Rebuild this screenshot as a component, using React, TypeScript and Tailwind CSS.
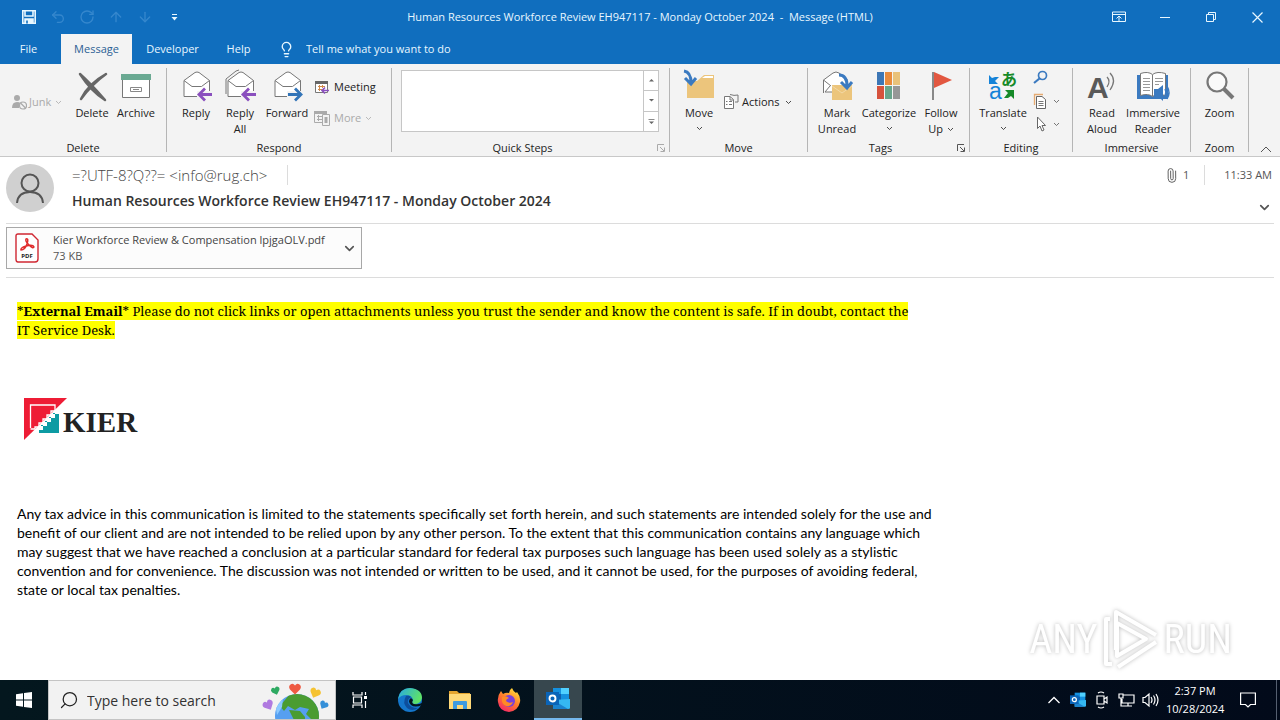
import type { ReactNode } from 'react';
import { clsx } from 'clsx';
import { ArrowDown, ArrowUp, ChevronDown, ChevronUp, Lightbulb, Paperclip, RotateCw, Search, Undo2 } from 'lucide-react';

const Caret = ({ className }: { className?: string }) => (
  <svg viewBox="0 0 7 5" className={clsx('w-[7px] h-[5px] shrink-0', className)} fill="none" stroke="currentColor" strokeOpacity="0.8">
    <path d="M1 1 L3.5 3.5 L6 1" />
  </svg>
);

const Icon = ({ children }: { children: ReactNode }) => (
  <svg viewBox="0 0 32 32" className="w-8 h-8 shrink-0 overflow-visible" fill="none">
    {children}
  </svg>
);

const SmallIcon = ({ children }: { children: ReactNode }) => (
  <svg viewBox="0 0 16 16" className="w-4 h-4 shrink-0" fill="none">
    {children}
  </svg>
);

const Envelope = ({ back = false }: { back?: boolean }) => (
  <>
    {back && <path d="M2 24 V9 L12 1 L15 0" stroke="#777" />}
    <path d="M4 10.500 L15 2.500 Q17 1.500 19 2.500 L29.500 10.500 V26.500 H4 Z" fill="#fff" stroke="#777" />
    <path d="M4 10.500 L12 16.500 H21.500 L29.500 10.500" stroke="#777" />
  </>
);

const LeftArrow = () => (
  <>
    <path d="M17 24 H33" stroke="#f3f3f3" strokeWidth="6" />
    <path d="M32 24.500 H19 M25 18.500 L19 24.500 L25 30.500" stroke="#8a4fbe" strokeWidth="2.800" />
  </>
);

type RibbonButtonProps = {
  icon: ReactNode;
  lines: string[];
  caret?: 'below' | 'inline';
  className?: string;
};

const RibbonButton = ({ icon, lines, caret, className }: RibbonButtonProps) => (
  <button type="button" className={clsx('flex flex-col items-center shrink-0 pt-[2px] leading-4', className)}>
    {icon}
    <span className="flex flex-col items-center pt-[3px] whitespace-nowrap">
      {lines.map((line, i) => (
        <span key={line} className="flex items-center gap-1">
          {line}
          {caret === 'inline' && i === lines.length - 1 && <Caret />}
        </span>
      ))}
    </span>
    {caret === 'below' && <Caret className="mt-[5px]" />}
  </button>
);

type GroupProps = { label: string; className: string; launcher?: 'dim' | 'dark'; children: ReactNode };

const Group = ({ label, className, launcher, children }: GroupProps) => (
  <section aria-label={label} className={clsx('relative flex flex-col shrink-0 h-[84px] border-r border-[#b5b5b5] mt-1', className)}>
    <div className="flex h-[74px] shrink-0">{children}</div>
    <div className="text-center leading-3">{label}</div>
    {launcher && (
      <button
        type="button"
        aria-label={`${label} settings`}
        className={clsx('absolute right-1 bottom-0', launcher === 'dim' ? 'text-[#aaa]' : 'text-[#555]')}
      >
        <svg viewBox="0 0 8 8" className="w-2 h-2" fill="none" stroke="currentColor">
          <path d="M0.500 7 V0.500 H7 M3 3 L7 7 M7.500 3.500 V7.500 H3.500" />
        </svg>
      </button>
    )}
  </section>
);

const TitleBar = () => (
  <div className="flex items-center h-[34px] text-[#e8f7ff]">
    <div className="flex-1">
      <div className="flex items-center gap-[13px] pl-[21px]">
        <button type="button" aria-label="Save">
          <svg viewBox="0 0 16 16" className="w-4 h-4" fill="none" stroke="currentColor" strokeWidth="1.600">
            <path d="M1.800 1.800 H14.200 V14.200 H1.800 Z M4 2 V7 H12 V2" />
            <path d="M4 10 H12 V14 H4 Z" fill="currentColor" />
            <path d="M6 11.500 V14.500" stroke="#106ebe" />
          </svg>
        </button>
        <button type="button" aria-label="Undo" className="text-[#3587cd]"><Undo2 size={16} /></button>
        <button type="button" aria-label="Redo" className="text-[#3587cd]"><RotateCw size={16} /></button>
        <button type="button" aria-label="Previous item" className="text-[#3587cd]"><ArrowUp size={16} /></button>
        <button type="button" aria-label="Next item" className="text-[#3587cd]"><ArrowDown size={16} /></button>
        <button type="button" aria-label="Customize toolbar" className="w-4 flex justify-center">
          <svg viewBox="0 0 7 7" className="w-[7px] h-[7px]" fill="currentColor">
            <path d="M1 0 H6 V1 H1 Z M0.500 3 H6.500 L3.500 6.500 Z" />
          </svg>
        </button>
      </div>
    </div>
    <h1 className="whitespace-pre">Human Resources Workforce Review EH947117 - Monday October 2024  -  Message (HTML)</h1>
    <div className="flex flex-1 justify-end h-[30px]">
      <button type="button" aria-label="Ribbon display options" className="w-[46px] flex items-center justify-center">
        <svg viewBox="0 0 14 12" className="w-[14px] h-3" fill="none" stroke="currentColor">
          <path d="M0.500 1 H13.500 V10.500 H0.500 Z M0.500 3.500 H13.500 M7 10 V5 M4.500 7.500 L7 5 L9.500 7.500" />
        </svg>
      </button>
      <button type="button" aria-label="Minimize" className="w-[46px] flex items-center justify-center">
        <span className="w-[10px] h-px bg-[#e8f7ff]" />
      </button>
      <button type="button" aria-label="Restore" className="w-[46px] flex items-center justify-center">
        <svg viewBox="0 0 10 10" className="w-[10px] h-[10px]" fill="none" stroke="currentColor">
          <path d="M0.500 2.500 H7.500 V9.500 H0.500 Z M2.500 2.500 V0.500 H9.500 V7.500 H7.500" />
        </svg>
      </button>
      <button type="button" aria-label="Close" className="w-[46px] flex items-center justify-center">
        <svg viewBox="0 0 11 11" className="w-[11px] h-[11px]" fill="none" stroke="currentColor" strokeWidth="1.200">
          <path d="M0.500 0.500 L10.500 10.500 M10.500 0.500 L0.500 10.500" />
        </svg>
      </button>
    </div>
  </div>
);

const Tabs = () => (
  <nav className="flex h-[30px] text-[#e8f7ff]">
    <button type="button" className="w-[61px] pr-1">File</button>
    <button type="button" className="w-[71px] bg-[#f3f3f3] text-[#2b5f94]">Message</button>
    <button type="button" className="w-[81px]">Developer</button>
    <button type="button" className="w-[51px]">Help</button>
    <label htmlFor="tell-me" className="flex items-center pl-[14px] pr-[11px]">
      <Lightbulb size={17} strokeWidth={1.9} />
    </label>
    <input
      id="tell-me"
      aria-label="Tell me what you want to do"
      placeholder="Tell me what you want to do"
      className="w-[200px] bg-transparent outline-none placeholder:text-[#e8f7ff]"
    />
  </nav>
);

const Ribbon = () => (
  <div className="flex h-[93px] bg-[#f3f3f3] border-b border-[#c8c8c8] text-[#222]">
    <Group label="Delete" className="w-[167px]">
      <button type="button" disabled className="flex items-center gap-[2px] w-[70px] pl-[11px] pb-[6px] text-[#aaa]">
        <SmallIcon>
          <circle cx="6" cy="4" r="3" fill="#aaa" />
          <path d="M1 14 Q1 8 6 8 Q9 8 9 9 L8 14 Z" fill="#aaa" />
          <circle cx="12" cy="11.500" r="3.500" fill="#f3f3f3" stroke="#aaa" strokeWidth="1.200" />
          <path d="M9.500 9 L14.500 14" stroke="#aaa" strokeWidth="1.200" />
        </SmallIcon>
        Junk
        <Caret className="ml-[2px]" />
      </button>
      <RibbonButton
        className="w-11"
        lines={['Delete']}
        icon={
          <Icon>
            <path d="M4 4 Q14 13 29 30 Q15 21 4 4 Z M30 4 Q16 14 5 29 Q12 14 30 4 Z" fill="#666" stroke="#666" strokeWidth="2.500" strokeLinejoin="round" />
          </Icon>
        }
      />
      <RibbonButton
        className="w-11"
        lines={['Archive']}
        icon={
          <Icon>
            <path d="M2.500 9 H29.500 V27.500 H2.500 Z" fill="#fff" stroke="#777" />
            <path d="M1 4 H31 V10 H1 Z" fill="#6aa992" />
            <path d="M10.500 17.500 H21.500 V21.500 H10.500 Z M13 19.500 H19" stroke="#888" />
          </Icon>
        }
      />
    </Group>

    <Group label="Respond" className="w-[225px]">
      <RibbonButton className="w-11 ml-[7px]" lines={['Reply']} icon={<Icon><Envelope /><LeftArrow /></Icon>} />
      <RibbonButton className="w-11" lines={['Reply', 'All']} icon={<Icon><Envelope back /><LeftArrow /></Icon>} />
      <RibbonButton
        className="w-[50px]"
        lines={['Forward']}
        icon={
          <Icon>
            <Envelope />
            <path d="M16 24 H32" stroke="#f3f3f3" strokeWidth="6" />
            <path d="M17 24.500 H30 M24 18.500 L30 24.500 L24 30.500" stroke="#3274b8" strokeWidth="2.800" />
          </Icon>
        }
      />
      <div className="flex flex-col gap-[15px] pt-[11px] pl-[2px] leading-4">
        <button type="button" className="flex items-center gap-1">
          <SmallIcon>
            <path d="M1.500 2.500 H13.500 V13.500 H1.500 Z" fill="#fff" stroke="#777" />
            <path d="M1 2 H14 V5 H1 Z" fill="#666" />
            <path d="M4 7.500 H11 M4 10.500 H8 M5.500 6 V12 M8.500 6 V9" stroke="#d08a4a" />
            <path d="M8 11.500 H15 M11 8.500 L8 11.500 L11 14.500" stroke="#8a4fbe" strokeWidth="1.600" />
          </SmallIcon>
          Meeting
        </button>
        <button type="button" disabled className="flex items-center gap-1 text-[#aaa]">
          <SmallIcon>
            <path d="M0.500 1.500 H12.500 V12.500 H0.500 Z M3 6.500 H8 M3 9.500 H8 M4.500 5 V11" stroke="#aaa" />
            <path d="M0 1 H13 V4 H0 Z" fill="#aaa" />
            <path d="M8.500 4.500 H15.500 V15.500 H8.500 Z" fill="#f3f3f3" stroke="#aaa" />
            <path d="M10.500 7 H13.500 V13 H10.500 Z" fill="#aaa" />
          </SmallIcon>
          More
          <Caret />
        </button>
      </div>
    </Group>

    <Group label="Quick Steps" className="w-[278px] pr-4" launcher="dim">
      <div className="flex shrink-0 ml-[9px] mt-[2px] w-[258px] h-[62px] bg-white border border-[#c6c6c6]">
        <div className="flex-1" />
        <div className="flex flex-col w-[15px] border-l border-[#c6c6c6] text-[#666]">
          {['M1 3.500 L3.500 1 L6 3.500 Z', 'M1 1 L3.500 3.500 L6 1 Z', 'M0.500 0 H6.500 V0.800 H0.500 Z M1 2.500 L3.500 5 L6 2.500 Z'].map((d, i) => (
            <button
              key={d}
              type="button"
              aria-label={['Scroll up', 'Scroll down', 'More steps'][i]}
              className={clsx('flex-1 flex items-center justify-center', i > 0 && 'border-t border-[#c6c6c6]')}
            >
              <svg viewBox="0 0 7 5" className="w-[7px] h-[5px]" fill="currentColor"><path d={d} /></svg>
            </button>
          ))}
        </div>
      </div>
    </Group>

    <Group label="Move" className="w-[138px]">
      <RibbonButton
        className="w-10 ml-[9px]"
        lines={['Move']}
        caret="below"
        icon={
          <Icon>
            <path d="M4 11 H14 L21 5 H31 V28 H4 Z" fill="#ecc57c" />
            <path d="M19 8 L22 6 H30 V8 Z" fill="#fff" />
            <path d="M1 1 Q8 2 8 13 M2 8 L8 14 L13 8" stroke="#3b7ac0" strokeWidth="3" />
          </Icon>
        }
      />
      <button type="button" className="flex items-center gap-[3px] pl-1 pb-[6px]">
        <SmallIcon>
          <path d="M1.500 2.500 H7 L10.500 5.500 V14.500 H1.500 Z" fill="#fff" stroke="#777" />
          <path d="M3 7.500 H4.500 M3 10.500 H4.500 M6 7.500 H9 M6 10.500 H9 M7 0.500 Q11 2 15 1 V8 H12 M7 3 V6 H10" stroke="#777" />
        </SmallIcon>
        Actions
        <Caret className="ml-[2px]" />
      </button>
    </Group>

    <Group label="Tags" className="w-[162px] pr-4" launcher="dark">
      <RibbonButton
        className="w-[52px] ml-[3px]"
        lines={['Mark', 'Unread']}
        icon={
          <Icon>
            <path d="M2.500 23 V10 L12 3 Q15 1 18 3 L26 9 V22 H4 L9 16 M2.500 10 L10 16" fill="#fff" stroke="#777" />
            <path d="M11 15 H31 V30 H11 Z" fill="#ecc57c" />
            <path d="M11 16 L21 23 L31 16" stroke="#f3d9a6" />
            <path d="M18 5 Q26 5 26 16 M20 12 L26 18 L31 12" stroke="#3b7ac0" strokeWidth="3" />
          </Icon>
        }
      />
      <RibbonButton
        className="w-[52px]"
        lines={['Categorize']}
        caret="below"
        icon={
          <Icon>
            <path d="M4 2 H11 V15 H4 Z" fill="#3c76b5" />
            <path d="M12 2 H19 V15 H12 Z" fill="#e98b3c" />
            <path d="M20 2 H27 V15 H20 Z" fill="#e9c27a" />
            <path d="M4 16 H11 V29 H4 Z" fill="#d6523c" />
            <path d="M12 16 H19 V29 H12 Z" fill="#68a58b" />
            <path d="M20 16 H27 V29 H20 Z" fill="#979797" />
          </Icon>
        }
      />
      <RibbonButton
        className="w-[52px]"
        lines={['Follow', 'Up']}
        caret="inline"
        icon={
          <Icon>
            <path d="M8 2 V30" stroke="#888" strokeWidth="2" />
            <path d="M9 2 L27 10 L9 18 Z" fill="#e25740" />
          </Icon>
        }
      />
    </Group>

    <Group label="Editing" className="w-[103px]">
      <RibbonButton
        className="w-[52px] ml-[7px]"
        lines={['Translate']}
        caret="below"
        icon={
          <Icon>
            <text x="14" y="15" fontSize="16" fontWeight="700" fill="#168a28" fontFamily="'Noto Sans CJK JP', sans-serif">あ</text>
            <text x="2" y="29" fontSize="23" fill="#1583d8" fontFamily="'Liberation Sans', sans-serif">a</text>
            <path d="M2 5 V14 H11 L8 11 L12 7 L8 7 L5 8 Z" fill="#1583d8" />
            <path d="M27 20 H18 L21 23 L17 28 H21 L24 26 L27 29 Z" fill="#168a28" />
          </Icon>
        }
      />
      <div className="flex flex-col gap-[7px] pl-1 pt-[2px] text-[#555]">
        <button type="button" aria-label="Find">
          <SmallIcon>
            <circle cx="9.500" cy="5.500" r="4" stroke="#3b7ac0" strokeWidth="1.700" />
            <path d="M6.500 8.500 L1 13" stroke="#3b7ac0" strokeWidth="2.200" />
          </SmallIcon>
        </button>
        <button type="button" aria-label="Related" className="flex items-center gap-1">
          <SmallIcon>
            <path d="M10 1.500 H1.500 V12" stroke="#e6ab72" strokeWidth="1.300" />
            <path d="M3.500 3.500 H9 L12.500 6.500 V15.500 H3.500 Z" fill="#fff" stroke="#666" />
            <path d="M5.500 8.500 H10.500 M5.500 10.500 H10.500 M5.500 12.500 H10.500" stroke="#777" />
          </SmallIcon>
          <Caret />
        </button>
        <button type="button" aria-label="Select" className="flex items-center gap-1">
          <SmallIcon>
            <path d="M4.500 1 V12.500 L7 10 L9 15 L11 14 L9 9.500 H12.500 Z" fill="#fff" stroke="#666" />
          </SmallIcon>
          <Caret />
        </button>
      </div>
    </Group>

    <Group label="Immersive" className="w-[118px]">
      <RibbonButton
        className="w-[46px] ml-[6px]"
        lines={['Read', 'Aloud']}
        icon={
          <Icon>
            <text x="1" y="28" fontSize="30" fontWeight="700" fill="#595959" fontFamily="'Liberation Sans', sans-serif">A</text>
            <path d="M21 7 Q25 11 21 17 M24 3 Q31 10 24 20" stroke="#777" strokeWidth="1.300" />
          </Icon>
        }
      />
      <RibbonButton
        className="w-14"
        lines={['Immersive', 'Reader']}
        icon={
          <Icon>
            <path d="M0 5 H4 V25 H28 V5 H31 V29 H0 Z" fill="#3b7ac0" />
            <path d="M3.500 3.500 Q11 1 15.500 4.500 Q20 1 28.500 3.500 V25.500 Q20 23 15.500 26.500 Q11 23 3.500 25.500 Z M15.500 5 V26" fill="#fff" stroke="#777" />
            <path d="M6 8.500 H13 M6 11.500 H13 M6 14.500 H13 M6 17.500 H13 M6 20.500 H13 M18 8.500 H26 M18 11.500 H26 M18 14.500 H22" stroke="#999" />
            <path d="M17 19 H21 L26 15 V31 L21 26 H17 Z" fill="#3b7ac0" />
            <path d="M28 19 Q30 22.500 28 26 M30 16 Q34 22.500 30 29" stroke="#3b7ac0" strokeWidth="1.400" />
          </Icon>
        }
      />
    </Group>

    <Group label="Zoom" className="w-[58px]">
      <RibbonButton
        className="w-[57px]"
        lines={['Zoom']}
        icon={
          <Icon>
            <circle cx="13" cy="12" r="9.500" fill="#fafafa" stroke="#777" strokeWidth="2.200" />
            <path d="M20 19 L29 28" stroke="#777" strokeWidth="4" />
          </Icon>
        }
      />
    </Group>

    <div className="flex flex-1 items-end justify-end pr-2">
      <button type="button" aria-label="Collapse ribbon">
        <svg viewBox="0 0 12 12" className="w-3 h-3" fill="none" stroke="#555"><path d="M1 8 L6 3 L11 8" /></svg>
      </button>
    </div>
  </div>
);

const MessageHeader = () => (
  <header className="mx-[6px] text-[#555]">
    <div className="flex h-[67px] border-b border-[#dcdcdc]">
      <svg viewBox="0 0 48 48" className="w-12 h-12 mt-[7px] shrink-0" fill="none" stroke="#555" strokeWidth="2">
        <circle cx="24" cy="24" r="24" fill="#d0d0d0" stroke="none" />
        <circle cx="24" cy="19" r="8.500" />
        <path d="M11 39 Q12 28 24 28 Q36 28 37 39" />
      </svg>
      <div className="flex-1 pl-[18px] pt-2">
        <div className="flex items-center h-5">
          <span className="text-[15px] leading-5 font-light text-[#444]">=?UTF-8?Q??= &lt;info@rug.ch&gt;</span>
          <span className="ml-5 w-px h-5 bg-[#dcdcdc]" />
        </div>
        <h2 className="pt-[5px] text-[14px] leading-[22px] font-semibold text-[#333]">
          Human Resources Workforce Review EH947117 - Monday October 2024
        </h2>
      </div>
      <div className="flex flex-col items-end pt-2 pr-[2px]">
        <div className="flex items-center h-5">
          <Paperclip size={15} strokeWidth={1.4} className="-rotate-45" />
          <span className="pl-1">1</span>
          <span className="mx-[15px] w-px h-5 bg-[#dcdcdc]" />
          <time className="pl-1">11:33 AM</time>
        </div>
        <button type="button" aria-label="Expand header" className="mt-[15px]">
          <ChevronDown size={15} strokeWidth={2.8} />
        </button>
      </div>
    </div>
    <div className="h-[54px] pt-[3px] border-b border-[#dcdcdc]">
      <div className="flex items-center w-[356px] h-[42px] border border-[#a8a8a8] bg-[#fcfcfc]">
        <a href="#attachment" className="flex items-center flex-1 pl-2 leading-4">
          <svg viewBox="0 0 24 30" className="w-6 h-[30px]" fill="none">
            <path d="M3 1 H17 L23 7 V26 Q23 29 20 29 H3 Q1 29 1 26 V3 Q1 1 3 1 Z" fill="#fff" stroke="#cf2732" strokeWidth="1.400" />
            <path d="M11 6 Q14 5 12 11 Q10 17 6 17 Q5 15 11 13 Q18 11 19 14 Q18 16 14 12 Q10 8 11 6 Z" stroke="#e02b2b" strokeWidth="1.500" />
            <text x="12" y="25" fontSize="6" fontWeight="700" textAnchor="middle" fill="#222" fontFamily="'Open Sans', sans-serif">PDF</text>
          </svg>
          <span className="pl-[14px] whitespace-nowrap">
            <span className="block text-[#444]">Kier Workforce Review &amp; Compensation lpjgaOLV.pdf</span>
            <span className="block">73 KB</span>
          </span>
        </a>
        <button type="button" aria-label="Attachment options" className="pr-1">
          <ChevronDown size={15} strokeWidth={2.6} />
        </button>
      </div>
    </div>
  </header>
);

const KierLogo = () => (
  <svg viewBox="0 0 118 46" className="w-[118px] h-[46px]" role="img" aria-label="Kier">
    <path d="M1 1 H44 L1 43 Z" fill="#ee1c35" />
    <path d="M36 13 V36 H14 V32 H18 V28 H22 V24 H26 V20 H30 V16 H34 V13 Z" fill="#0d9ba3" />
    <path d="M7.500 31 V8 H32 V14 H28 V18 H24 V22 H20 V26 H16 V30 H12 V32 H7.500" fill="none" stroke="#fff" strokeWidth="1.300" />
    <path d="M32 13 h4 v4 h-4 z M28 17 h4 v4 h-4 z M24 21 h4 v4 h-4 z M20 25 h4 v4 h-4 z M16 29 h4 v4 h-4 z M12 32 h4 v4 h-4 z" fill="#fff" />
    <text x="40" y="35" fontSize="29" fontWeight="700" fill="#222" fontFamily="'Liberation Serif', serif">KIER</text>
  </svg>
);

const MessageBody = () => (
  <main className="relative flex-1 px-[17px] pt-6 text-black whitespace-nowrap">
    <p className="font-['Noto_Serif','Liberation_Serif',serif] text-[13px] leading-[19px]">
      <span className="bg-[#ffff00]">
        *<b>External Email</b>* Please do not click links or open attachments unless you trust the sender and know the content is safe. If in doubt, contact the
        <br />
        IT Service Desk.
      </span>
    </p>
    <div className="mt-[57px] ml-[6px]">
      <KierLogo />
    </div>
    <p className="mt-[61px] font-[Lato,sans-serif] text-[14px] leading-[19px]">
      Any tax advice in this communication is limited to the statements specifically set forth herein, and such statements are intended solely for the use and
      <br />
      benefit of our client and are not intended to be relied upon by any other person. To the extent that this communication contains any language which
      <br />
      may suggest that we have reached a conclusion at a particular standard for federal tax purposes such language has been used solely as a stylistic
      <br />
      convention and for convenience. The discussion was not intended or written to be used, and it cannot be used, for the purposes of avoiding federal,
      <br />
      state or local tax penalties.
    </p>
    <div className="absolute right-12 bottom-2 flex items-center gap-1 text-[40px] leading-none text-white font-['Liberation_Sans_Narrow','Roboto_Condensed',sans-serif] drop-shadow-[0_0_2px_#bbb]">
      <span>ANY</span>
      <svg viewBox="0 0 58 64" className="w-[58px] h-16" fill="none" stroke="#fff" strokeWidth="4" strokeLinejoin="round">
        <path d="M14 42 V4 L54 27 M54 34 L16 59 M8 11 H4 V56 H10 M15 15 L44 31 L15 48 Z" />
      </svg>
      <span>RUN</span>
    </div>
  </main>
);

const OutlookIcon = ({ className }: { className: string }) => (
  <svg viewBox="0 0 24 24" className={className}>
    <path d="M7 1 H23 V18 H7 Z" fill="#1490df" />
    <path d="M15 1 H23 V7 H15 Z" fill="#50d0ff" />
    <path d="M7 7 H15 V13 H7 Z" fill="#0f5fae" />
    <path d="M7 13 L24 12 V21 Q24 22 22 22 H7 Z" fill="#35b8f1" />
    <path d="M7 13 L22 22 H7 Z" fill="#1a83cf" />
    <path d="M0 5 H13 V18 H0 Z" fill="#0a64b8" />
    <circle cx="6.500" cy="11.500" r="3" fill="none" stroke="#fff" strokeWidth="1.900" />
  </svg>
);

const EarthIcon = () => (
  <svg viewBox="0 0 70 38" className="w-[70px] h-[38px] self-end">
    <defs>
      <clipPath id="earth"><circle cx="36" cy="35" r="22" /></clipPath>
    </defs>
    <circle cx="36" cy="35" r="22" fill="#569ff0" />
    <g clipPath="url(#earth)" fill="#4a9c32">
      <path d="M28 14 Q42 10 52 18 L59 30 V38 H50 L45 33 L48 28 L39 26 L34 29 L27 25 L23 30 L19 25 Z" />
      <path d="M28 29 L39 30 L44 36 V39 H33 Z" />
      <path d="M14 22 L22 17 L21 26 L16 34 Z" fill="#8bc9ff" />
    </g>
    {[
      { place: 'translate(28 2)', color: '#ee5a43', size: 12 },
      { place: 'translate(9 7) rotate(-18)', color: '#2eaa62', size: 9 },
      { place: 'translate(51 5) rotate(22)', color: '#f5c332', size: 11 },
      { place: 'translate(0 22) rotate(-28)', color: '#b07ae0', size: 11 },
      { place: 'translate(61 18) rotate(30)', color: '#348fd8', size: 9 },
    ].map(({ place, color, size }) => (
      <g key={place} transform={place}>
        <svg viewBox="0 0 12 11" width={size} height={size} overflow="visible">
          <path d="M6 11 L1 6 Q-1 3 1.500 1 Q4 -1 6 2 Q8 -1 10.500 1 Q13 3 11 6 Z" fill={color} />
        </svg>
      </g>
    ))}
  </svg>
);

const EdgeIcon = () => (
  <svg viewBox="0 0 24 24" className="w-6 h-6">
    <defs>
      <linearGradient id="edge-top" x1="0" x2="1" y2="0.400">
        <stop stopColor="#27a9e5" />
        <stop offset="1" stopColor="#5ee268" />
      </linearGradient>
    </defs>
    <circle cx="12" cy="12" r="12" fill="#1476cb" />
    <path d="M0 11 Q2 0 12 0 Q24 1 24 10 Q23 16 16 16 Q13 15 15 12 Q14 7 8 7 Q3 7 0 11 Z" fill="url(#edge-top)" />
    <path d="M8 8 Q4 15 9 20 Q14 24 20 20 Q12 20 10 15 Q9 11 13 9 Q11 7 8 8 Z" fill="#0d4e9c" />
    <path d="M13 10 Q9 13 13 17 Q17 20 24 17 L24 15 Q20 17 16 16 Q13 15 15 12 Z" fill="#04151d" />
  </svg>
);

const FirefoxIcon = () => (
  <svg viewBox="0 0 24 24" className="w-6 h-6">
    <defs>
      <linearGradient id="fox" x1="0.800" y1="0" x2="0.200" y2="1">
        <stop stopColor="#ffe43a" />
        <stop offset="0.500" stopColor="#ff7a2b" />
        <stop offset="1" stopColor="#f4206c" />
      </linearGradient>
    </defs>
    <path d="M4 3 L6 6 Q9 4 12 5 Q12 2 15 0 Q16 3 19 5 L20 4 Q24 9 23 14 Q21 23 12 24 Q2 23 1 14 Q0 8 4 3 Z" fill="url(#fox)" />
    <circle cx="12" cy="13" r="6" fill="#7a40d8" />
    <path d="M5 9 Q9 7 12 10 Q9 11 9 13 Q12 16 16 14 Q14 19 9 18 Q4 16 5 9 Z" fill="#ff8a25" />
  </svg>
);

const Taskbar = () => (
  <footer className="flex h-10 bg-linear-to-r from-[#04171e] to-[#020a1a] text-white">
    <button type="button" aria-label="Start" className="w-12 flex items-center justify-center">
      <svg viewBox="0 0 16 16" className="w-4 h-4" fill="#fff">
        <path d="M0 2.200 L7 1.200 V7.500 H0 Z M8 1 L16 0 V7.500 H8 Z M0 8.500 H7 V14.800 L0 13.800 Z M8 8.500 H16 V16 L8 15 Z" />
      </svg>
    </button>
    <div className="flex items-center w-[288px] pl-[10px] pr-1 bg-[#f2f2f2] border border-[#c4c4c4] text-[#222]">
      <label htmlFor="task-search"><Search size={20} strokeWidth={1.5} className="-scale-x-100" /></label>
      <input
        id="task-search"
        aria-label="Type here to search"
        placeholder="Type here to search"
        className="flex-1 min-w-0 ml-2 bg-transparent outline-none text-[14px] placeholder:text-[#333]"
      />
      <EarthIcon />
    </div>
    <button type="button" aria-label="Task view" className="w-12 flex items-center justify-center">
      <svg viewBox="0 0 16 16" className="w-4 h-4" fill="none" stroke="#fff" strokeWidth="1.200">
        <path d="M1 0 V3 H10 V0 M1.500 5 H9.500 V11 H1.500 Z M1 16 V13 H10 V16 M13.500 0 V3 M13.500 9 V16" />
        <path d="M12 4 h3 v3 h-3 z" fill="#fff" stroke="none" />
      </svg>
    </button>
    <button type="button" aria-label="Edge" className="w-[52px] flex items-center justify-center"><EdgeIcon /></button>
    <button type="button" aria-label="File Explorer" className="w-12 flex items-center justify-center">
      <svg viewBox="0 0 22 20" className="w-[22px] h-5">
        <path d="M0 1 H8 L10 3 H21 V6 H0 Z" fill="#e5a52f" />
        <path d="M0 4 H22 V19 H0 Z" fill="#ffd978" />
        <path d="M4 12 Q4 11 5 11 H17 Q18 11 18 12 V19 H14 V15 H8 V19 H4 Z" fill="#3f9be0" />
      </svg>
    </button>
    <button type="button" aria-label="Firefox" className="w-[50px] flex items-center justify-center"><FirefoxIcon /></button>
    <button type="button" aria-label="Outlook" className="w-12 flex items-center justify-center bg-[#37474e] border-b-2 border-[#76b9ed]">
      <OutlookIcon className="w-6 h-6" />
    </button>
    <div className="flex flex-1 items-center justify-end">
      <button type="button" aria-label="Show hidden icons" className="mr-2">
        <svg viewBox="0 0 16 16" className="w-4 h-4" fill="none" stroke="#fff" strokeWidth="1.300"><path d="M2.500 11 L8 5.500 L13.500 11" /></svg>
      </button>
      <OutlookIcon className="w-4 h-4 mr-2" />
      <svg viewBox="0 0 16 18" className="w-4 h-[18px] mr-2" fill="none" stroke="#fff" strokeWidth="1.200">
        <path d="M4 2 Q7 0 10 2 M4 16 Q7 18 10 16 M3 5 H10 V13 H3 Z M10 8 L13 6 V12 L10 10" />
      </svg>
      <svg viewBox="0 0 18 16" className="w-[18px] h-4 mr-[6px]" fill="none" stroke="#fff" strokeWidth="1.200">
        <path d="M5 3 H16 V11 H4 V7 M1 2 H5 V6 H1 Z M3 6 V14 H6 M10 11 V14 M6 14 H14" />
      </svg>
      <svg viewBox="0 0 18 16" className="w-[18px] h-4 mr-[6px]" fill="none" stroke="#fff" strokeWidth="1.200">
        <path d="M1 5.500 H3 L7 2 V14 L3 10.500 H1 Z M9 5 Q11 8 9 11 M11.500 3.500 Q14.500 8 11.500 12.500 M14 2 Q18 8 14 14" />
      </svg>
      <time className="w-[58px] text-center leading-[18px] whitespace-nowrap">
        2:37 PM
        <br />
        10/28/2024
      </time>
      <button type="button" aria-label="Notifications" className="ml-4">
        <svg viewBox="0 0 16 16" className="w-4 h-4" fill="none" stroke="#fff" strokeWidth="1.200">
          <path d="M0.600 1 H15.400 V12.500 H10.500 L8 15 L5.500 12.500 H0.600 Z" />
        </svg>
      </button>
      <span className="w-px h-10 ml-5 mr-[3px] bg-[#555f70]" />
    </div>
  </footer>
);

const App = () => (
  <div className="flex flex-col min-h-screen bg-white font-['Open_Sans','Noto_Sans',sans-serif] text-[11px]">
    <div className="bg-[#106ebe]">
      <TitleBar />
      <Tabs />
    </div>
    <Ribbon />
    <MessageHeader />
    <MessageBody />
    <Taskbar />
  </div>
);

export default App;
